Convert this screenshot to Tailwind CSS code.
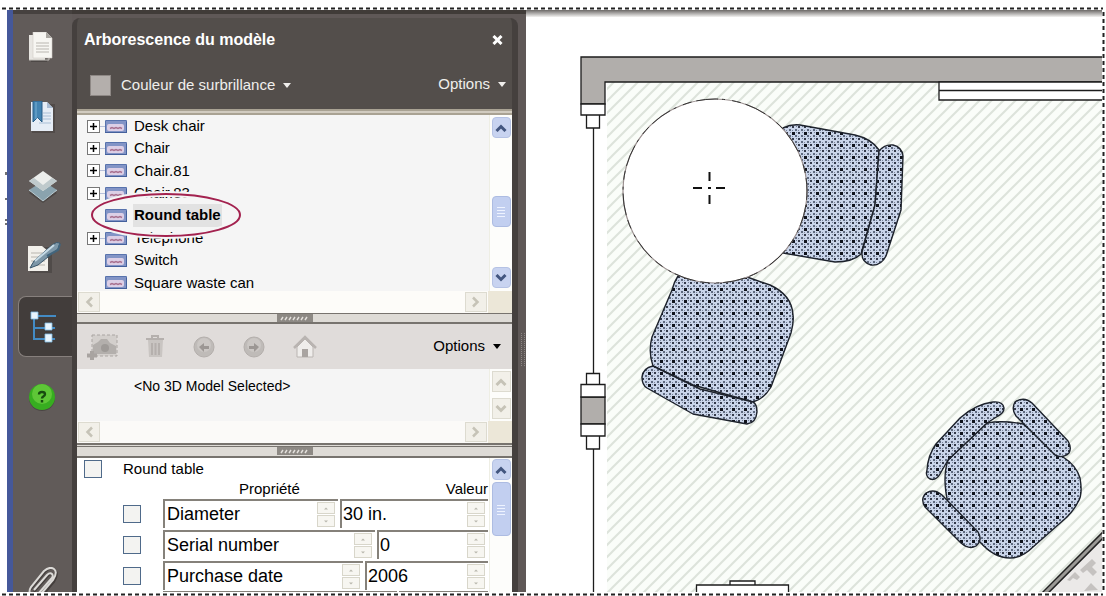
<!DOCTYPE html>
<html lang="fr">
<head>
<meta charset="utf-8">
<title>Arborescence du modèle</title>
<script src="https://cdn.jsdelivr.net/npm/@tailwindcss/browser@4"></script>
</head>
<body class="h-screen overflow-hidden bg-white font-['Liberation_Sans',sans-serif] text-[15px] text-black">

<!-- Shared symbols -->
<svg class="hidden" aria-hidden="true">
  <symbol id="part" viewBox="0 0 22 13">
    <rect width="22" height="13" rx="1" fill="#5873ad"/><rect x="1" y="1" width="20" height="11" fill="#8294c6"/>
    <rect x="2" y="4" width="17" height="7" rx="2" fill="#dccfe6"/>
    <path d="M5 8.500l2-1 2 1 2-1 2 1 2-1 2 1" stroke="#a8718f" stroke-width="1.500" fill="none"/>
    <path d="M0 12.500h22M21.500 2v11" stroke="#44609c"/>
  </symbol>
  <symbol id="plus" viewBox="0 0 13 13">
    <rect x=".5" y=".5" width="12" height="12" fill="#fff" stroke="#777"/><path d="M3 6.500h7M6.500 3v7" stroke="#000" stroke-width="1.500"/>
  </symbol>
  <symbol id="up" viewBox="0 0 12 8"><path d="M1.500 7L6 2.500 10.500 7" fill="none" stroke="currentColor" stroke-width="3"/></symbol>
  <symbol id="down" viewBox="0 0 12 8"><path d="M1.500 1L6 5.500 10.500 1" fill="none" stroke="currentColor" stroke-width="3"/></symbol>
  <symbol id="left" viewBox="0 0 8 12"><path d="M7 1.500L2.500 6 7 10.500" fill="none" stroke="currentColor" stroke-width="2.500"/></symbol>
  <symbol id="right" viewBox="0 0 8 12"><path d="M1 1.500L5.500 6 1 10.500" fill="none" stroke="currentColor" stroke-width="2.500"/></symbol>
  <symbol id="spin" viewBox="0 0 18 25">
    <rect x=".5" y=".5" width="17" height="11" fill="#f7f6f1" stroke="#d8d6ca"/><rect x=".5" y="13.500" width="17" height="11" fill="#f7f6f1" stroke="#d8d6ca"/>
    <path d="M7 7.500l2-2 2 2zM7 18.500l2 2 2-2z" fill="#b9b7ad"/>
  </symbol>
</svg>

<div class="flex h-full flex-col pl-[2px]">
  <svg class="h-[10px] w-full shrink-0" aria-hidden="true"><line x1="0" y1="8.500" x2="1101" y2="8.500" stroke="#222" stroke-width="2" stroke-dasharray="4 3"/></svg>
  <div class="flex min-h-0 flex-1">
    <svg class="w-[5px] shrink-0" aria-hidden="true"><path d="M4 162v3M4 188v2M4 209v2M4 213v2" stroke="#444" stroke-width="1.500"/></svg>

    <div class="flex min-w-0 flex-1 border-l-[6px] border-[#45589a]">
      <!-- Navigation strip -->
      <nav class="flex w-[59px] shrink-0 flex-col border-t-4 border-[#46413f] bg-[#615b59]">
        <div class="flex h-[282px] flex-col items-center justify-between pt-[18px] pb-[22px]">
          <button aria-label="Pages" class="pr-px"><svg width="28" height="32" viewBox="0 0 28 32">
            <path d="M3 5h16v25H3z" fill="#393533" opacity=".5"/><path d="M1 3h16v25H1z" fill="#e8e6e2"/><path d="M1 28h20v-3" fill="none" stroke="#c5c2bd"/>
            <path d="M5 0h13l6 6v20H5z" fill="#f7f6f2" stroke="#d1cec8" stroke-width=".6"/><path d="M18 0v6h6z" fill="#aaa7a2"/>
            <path d="M8 11h13M8 14h13M8 17h13M8 20h13" stroke="#b9b6b0"/></svg></button>
          <button aria-label="Signets"><svg width="28" height="33" viewBox="0 0 28 33">
            <path d="M3 3h23v29H3z" fill="#393533" opacity=".4"/><path d="M2 1h16l6 6v23H2z" fill="#e6edf6"/><path d="M18 1v6h6z" fill="#a9bdd5"/>
            <path d="M14 12h8M14 15h8M14 18h8M10 22h12" stroke="#aabfd6"/><path d="M4 0h9v21l-4.500-4.500L4 21z" fill="#4384b3" stroke="#285d87"/><path d="M7 1v17" stroke="#78b0d4"/></svg></button>
          <button aria-label="Calques"><svg width="30" height="33" viewBox="0 0 30 33">
            <path d="M15 13L29 23 15 33 1 23z" fill="#383431" opacity=".5"/><path d="M15 11l14 9-14 11L1 20z" fill="#8aa3ae"/><path d="M1 20l14 11 14-11" fill="none" stroke="#b9cbd2"/>
            <path d="M15 1l14 10-14 10L1 11z" fill="#eceeec"/><path d="M1 11l14 10 14-10-5-3-9 7-9-7z" fill="#bfcacc"/></svg></button>
          <button aria-label="Signatures" class="pl-1"><svg width="36" height="34" viewBox="0 0 36 34">
            <path d="M3 7h22v26H3z" fill="#383431" opacity=".4"/><path d="M1 6h14l6 5v20H1z" fill="#f2f0eb"/><path d="M4 13h12M4 17h10M4 21h14M4 25h14" stroke="#b8b5ae"/>
            <path d="M3 28l4-7L25 5q5-4 8-2l-2 6L11 25z" fill="#7d97a8" stroke="#3a566a"/><path d="M8 21L27 5" stroke="#c6dae5" stroke-width="2"/><path d="M20 16l11-6 2-6" fill="none" stroke="#42657d" stroke-width="2"/></svg></button>
        </div>
        <button aria-label="Arborescence du modèle" class="ml-[5px] flex h-[61px] items-center rounded-l-lg border-y border-l border-[#87807d] bg-[#423d3b] pl-[11px]">
          <svg width="28" height="32" viewBox="0 0 28 32"><path d="M4 5v23h21M4 17h21M8 5h18" fill="none" stroke="#438bc4" stroke-width="2"/><path d="M1 1h7v7H1zM15 12h7v7h-7zM15 23h7v8h-7z" fill="#e9f5fd" stroke="#81bce5" stroke-width=".8"/></svg>
        </button>
        <div class="flex min-h-0 flex-1 flex-col items-center justify-between overflow-hidden pt-[26px]">
          <button aria-label="Aide" class="pr-0.5"><svg width="28" height="30" viewBox="0 0 28 30"><circle cx="14" cy="15" r="13" fill="#35312f" opacity=".5"/><circle cx="14" cy="14" r="13" fill="#37ad20"/><circle cx="14" cy="11" r="10" fill="#6fd042" opacity=".7"/>
            <path d="M11 11.500q0-2.500 3-2.500t3 2.200q0 1.300-1.700 2.300-1.300.8-1.300 2M14 17v2.500" fill="none" stroke="#174b10" stroke-width="2.400"/></svg></button>
          <button aria-label="Pièces jointes" class="h-[25px] overflow-hidden"><svg width="30" height="34" viewBox="0 0 30 34"><path d="M6 25L20 9q3-3 5-1t-1 6L11 29q-4 4-8 1t0-8L17 5q6-6 10-2t-1 12L15 28" fill="none" stroke="#302c2a" stroke-width="2" opacity=".6"/><path d="M6 23L19 8q3-3 5-1t-1 5L10 27q-4 4-7 1t0-8L16 4q6-5 10-2t-1 11L13 27" fill="none" stroke="#dcdad7" stroke-width="2"/></svg></button>
        </div>
      </nav>

      <!-- Model tree panel -->
      <div class="flex w-[454px] shrink-0 border-t-4 border-[#403b38] bg-[#5f5857] pt-1 pr-2">
        <section class="flex min-w-0 flex-1 flex-col rounded-t-lg border-r-[6px] border-l-[5px] border-[#45403e] bg-[#534e4b]">
          <header class="flex flex-col text-[#f0eeec]">
            <div class="flex h-[43px] items-center justify-between pr-[9px] pl-[7px]">
              <h1 class="text-[16px] font-bold text-white">Arborescence du modèle</h1>
              <button aria-label="Fermer"><svg width="11" height="10" viewBox="0 0 11 10"><path d="M1.500 1l8 8M9.500 1l-8 8" stroke="#fff" stroke-width="3"/></svg></button>
            </div>
            <div class="flex h-[48px] items-center justify-between pr-[6px] pl-[13px]">
              <button class="flex items-center"><span class="mr-[10px] size-[21px] border border-[#8e8885] bg-[#b4afac]"></span>Couleur de surbrillance<svg class="ml-2" width="8" height="5"><path d="M0 0h8L4 5z" fill="#f0eeec"/></svg></button>
              <button class="flex items-center pb-0.5">Options<svg class="ml-2" width="8" height="5"><path d="M0 0h8L4 5z" fill="#f0eeec"/></svg></button>
            </div>
          </header>
          <div class="h-[6px] shrink-0 border-y-2 border-[#a9a293] bg-[#d1cbc0]"></div>

          <!-- Parts tree -->
          <div class="relative flex h-[176px] shrink-0 bg-[#f5f5f5]">
            <ul class="grid h-[179px] min-w-0 flex-1 grid-rows-8 pl-[10px]">
              <li class="flex items-center"><svg width="13" height="13"><use href="#plus"/></svg><span class="w-[5px] border-t border-[#b7c0da]"></span><svg class="mr-[7px]" width="22" height="13"><use href="#part"/></svg>Desk chair</li>
              <li class="flex items-center"><svg width="13" height="13"><use href="#plus"/></svg><span class="w-[5px] border-t border-[#b7c0da]"></span><svg class="mr-[7px]" width="22" height="13"><use href="#part"/></svg>Chair</li>
              <li class="flex items-center"><svg width="13" height="13"><use href="#plus"/></svg><span class="w-[5px] border-t border-[#b7c0da]"></span><svg class="mr-[7px]" width="22" height="13"><use href="#part"/></svg>Chair.81</li>
              <li class="flex items-center"><svg width="13" height="13"><use href="#plus"/></svg><span class="w-[5px] border-t border-[#b7c0da]"></span><svg class="mr-[7px]" width="22" height="13"><use href="#part"/></svg>Chair.83</li>
              <li class="flex items-center pl-[18px]"><svg class="mr-[6px]" width="22" height="13"><use href="#part"/></svg><span class="bg-[#e2e2e2] px-px font-bold">Round table</span></li>
              <li class="flex items-center"><svg width="13" height="13"><use href="#plus"/></svg><span class="w-[5px] border-t border-[#b7c0da]"></span><svg class="mr-[7px]" width="22" height="13"><use href="#part"/></svg>Telephone</li>
              <li class="flex items-center pl-[18px]"><svg class="mr-[7px]" width="22" height="13"><use href="#part"/></svg>Switch</li>
              <li class="flex items-center pl-[18px]"><svg class="mr-[7px]" width="22" height="13"><use href="#part"/></svg>Square waste can</li>
            </ul>
            <div class="flex w-[23px] flex-col items-center border-l border-[#eeeee4] bg-[#fdfdfb] pt-0.5 pb-[3px]">
              <button aria-label="Défiler vers le haut" class="flex h-[21px] w-[19px] items-center justify-center rounded-sm border border-[#b5c2e4] bg-[#c8d3f0] text-[#43567f]"><svg width="12" height="8"><use href="#up"/></svg></button>
              <div class="mt-[58px] flex h-[31px] w-[19px] items-center justify-center rounded-sm border border-[#adbce2] bg-[#c2cff0]"><svg width="8" height="11"><path d="M0 1.500h8M0 4.500h8M0 7.500h8M0 10.500h8" stroke="#eef3ff"/></svg></div>
              <button aria-label="Défiler vers le bas" class="mt-auto flex h-[21px] w-[19px] items-center justify-center rounded-sm border border-[#b5c2e4] bg-[#c8d3f0] text-[#43567f]"><svg width="12" height="8"><use href="#down"/></svg></button>
            </div>
            <!-- Callout ring round the selected part -->
            <svg class="absolute top-[75px] left-[12px]" width="156" height="50" aria-hidden="true"><ellipse cx="77" cy="25" rx="74" ry="21" fill="none" stroke="#f5f5f5" stroke-width="6"/><ellipse cx="77" cy="25" rx="74" ry="21" fill="none" stroke="#a3224f" stroke-width="2"/></svg>
          </div>
          <div class="flex h-[22px] shrink-0 items-center bg-[#fdfcf9]">
            <button aria-label="Défiler à gauche" class="ml-px flex h-[20px] w-[22px] items-center justify-center border border-[#dddbd0] bg-[#f2f0e9] text-[#c6c3b7]"><svg width="8" height="12"><use href="#left"/></svg></button>
            <button aria-label="Défiler à droite" class="ml-auto flex h-[20px] w-[22px] items-center justify-center border border-[#dddbd0] bg-[#f2f0e9] text-[#c6c3b7]"><svg width="8" height="12"><use href="#right"/></svg></button>
            <span class="ml-px h-full w-[24px] bg-[#ece7d8]"></span>
          </div>
          <div class="flex h-[11px] shrink-0 justify-center border-t border-b-2 border-[#77736e] bg-[#dedbd6]"><svg width="36" height="8"><rect width="36" height="8" fill="#8d8984"/><path d="M4 6l2-3M8 6l2-3M12 6l2-3M16 6l2-3M20 6l2-3M24 6l2-3M28 6l2-3" stroke="#e3e0dc" stroke-width="1.500"/></svg></div>

          <!-- View toolbar -->
          <div class="flex h-[45px] shrink-0 items-center bg-[#e0dcda] pr-[11px] pl-[9px]">
            <button aria-label="Créer une vue"><svg width="33" height="28" viewBox="0 0 33 28"><rect x="6" y="2" width="25" height="21" fill="#d3cfcc" stroke="#aaa5a2" stroke-dasharray="3 2"/><path d="M7 21v-9l5-3 3-3h6l3 4 6 3v8z" fill="#b3afac"/><circle cx="19" cy="15" r="4" fill="#9e9a97"/><path d="M6 18v9M1 22.500h10" stroke="#a9a4a1" stroke-width="4"/></svg></button>
            <button aria-label="Supprimer" class="ml-[25px]"><svg width="22" height="26" viewBox="0 0 22 26"><path d="M4 6h15l-1 17H5z" fill="#c9c5c2"/><path d="M2 5h18M8 5V2h6v3M8 9v12M11.500 9v12M15 9v12" fill="none" stroke="#b5b0ad" stroke-width="2"/></svg></button>
            <button aria-label="Vue précédente" class="ml-[27px]"><svg width="22" height="22" viewBox="0 0 22 22"><circle cx="11" cy="11" r="10" fill="#bfbbb8" stroke="#b4afac"/><circle cx="11" cy="9" r="7" fill="#cbc7c4"/><path d="M6 11l5-4v3h5v3h-5v3z" fill="#9c9794"/></svg></button>
            <button aria-label="Vue suivante" class="ml-[28px]"><svg width="22" height="22" viewBox="0 0 22 22"><circle cx="11" cy="11" r="10" fill="#bfbbb8" stroke="#b4afac"/><circle cx="11" cy="9" r="7" fill="#cbc7c4"/><path d="M16 11l-5-4v3H6v3h5v3z" fill="#9c9794"/></svg></button>
            <button aria-label="Vue par défaut" class="ml-[28px]"><svg width="24" height="24" viewBox="0 0 24 24"><path d="M4 12v10h16V12l-8-8z" fill="#efedeb" stroke="#bab5b2"/><path d="M1 13L12 2l11 11" fill="none" stroke="#b9b4b1" stroke-width="2.500"/><path d="M9 14h6v8H9z" fill="#a9a4a1"/></svg></button>
            <button class="ml-auto flex items-center">Options<svg class="ml-2" width="8" height="5"><path d="M0 0h8L4 5z"/></svg></button>
          </div>
          <div class="flex h-[52px] shrink-0 bg-[#f5f5f5]">
            <p class="flex-1 pt-[7px] pl-[57px] text-[14px]">&lt;No 3D Model Selected&gt;</p>
            <div class="flex w-[23px] flex-col items-center justify-between border-l border-[#eeeee4] bg-[#fdfdfb] py-0.5">
              <button aria-label="Défiler vers le haut" class="flex h-[21px] w-[19px] items-center justify-center border border-[#dddbd0] bg-[#f2f0e9] text-[#c6c3b7]"><svg width="12" height="8"><use href="#up"/></svg></button>
              <button aria-label="Défiler vers le bas" class="flex h-[21px] w-[19px] items-center justify-center border border-[#dddbd0] bg-[#f2f0e9] text-[#c6c3b7]"><svg width="12" height="8"><use href="#down"/></svg></button>
            </div>
          </div>
          <div class="flex h-[22px] shrink-0 items-center bg-[#fbfaf8]">
            <button aria-label="Défiler à gauche" class="ml-px flex h-[20px] w-[22px] items-center justify-center border border-[#dddbd0] bg-[#f2f0e9] text-[#c6c3b7]"><svg width="8" height="12"><use href="#left"/></svg></button>
            <button aria-label="Défiler à droite" class="ml-auto flex h-[20px] w-[22px] items-center justify-center border border-[#dddbd0] bg-[#f2f0e9] text-[#c6c3b7]"><svg width="8" height="12"><use href="#right"/></svg></button>
            <span class="ml-px h-full w-[24px] bg-[#ece7d8]"></span>
          </div>
          <div class="h-[3px] shrink-0 border-t-2 border-[#77736e] bg-[#dedbd6]"></div>
          <div class="flex h-[12px] shrink-0 justify-center border-t border-b-2 border-[#77736e] bg-[#dedbd6]"><svg width="36" height="9"><rect width="36" height="8" fill="#8d8984"/><path d="M4 6l2-3M8 6l2-3M12 6l2-3M16 6l2-3M20 6l2-3M24 6l2-3M28 6l2-3" stroke="#e3e0dc" stroke-width="1.500"/></svg></div>

          <!-- Properties -->
          <div class="flex min-h-0 flex-1 overflow-hidden bg-white">
            <div class="flex min-w-0 flex-1 flex-col pr-px">
              <label class="flex h-[22px] shrink-0 items-center pl-[7px]"><input type="checkbox" class="mr-[21px] size-[18px] appearance-none border border-[#4f6a8a] bg-[#f3f3f1]">Round table</label>
              <div class="flex h-[19px] shrink-0 items-center justify-between pl-[162px]"><span>Propriété</span><span>Valeur</span></div>
              <div class="flex shrink-0 flex-col gap-0.5 pl-[46px]">
                <div class="flex h-[29px] items-center">
                  <input type="checkbox" aria-label="Diameter" class="mr-[22px] size-[18px] appearance-none border border-[#4f6a8a] bg-[#f3f3f1]">
                  <div class="mr-0.5 flex h-full w-[175px] items-center border-t-2 border-l-2 border-[#85817a] pr-0.5"><input aria-label="Propriété 1" value="Diameter" class="min-w-0 flex-1 pl-0.5 text-[18px]"><svg width="20" height="25"><use href="#spin"/></svg></div>
                  <div class="flex h-full min-w-0 flex-1 items-center border-t-2 border-l-2 border-[#85817a] pr-0.5"><input aria-label="Valeur 1" value="30 in." class="min-w-0 flex-1 pl-px text-[18px]"><svg width="20" height="25"><use href="#spin"/></svg></div>
                </div>
                <div class="flex h-[29px] items-center">
                  <input type="checkbox" aria-label="Serial number" class="mr-[22px] size-[18px] appearance-none border border-[#4f6a8a] bg-[#f3f3f1]">
                  <div class="mr-0.5 flex h-full w-[212px] items-center border-t-2 border-l-2 border-[#85817a] pr-0.5"><input aria-label="Propriété 2" value="Serial number" class="min-w-0 flex-1 pl-0.5 text-[18px]"><svg width="20" height="25"><use href="#spin"/></svg></div>
                  <div class="flex h-full min-w-0 flex-1 items-center border-t-2 border-l-2 border-[#85817a] pr-0.5"><input aria-label="Valeur 2" value="0" class="min-w-0 flex-1 pl-px text-[18px]"><svg width="20" height="25"><use href="#spin"/></svg></div>
                </div>
                <div class="flex h-[29px] items-center">
                  <input type="checkbox" aria-label="Purchase date" class="mr-[22px] size-[18px] appearance-none border border-[#4f6a8a] bg-[#f3f3f1]">
                  <div class="mr-0.5 flex h-full w-[200px] items-center border-t-2 border-l-2 border-[#85817a] pr-0.5"><input aria-label="Propriété 3" value="Purchase date" class="min-w-0 flex-1 pl-0.5 text-[18px]"><svg width="20" height="25"><use href="#spin"/></svg></div>
                  <div class="flex h-full min-w-0 flex-1 items-center border-t-2 border-l-2 border-[#85817a] pr-0.5"><input aria-label="Valeur 3" value="2006" class="min-w-0 flex-1 pl-px text-[18px]"><svg width="20" height="25"><use href="#spin"/></svg></div>
                </div>
                <div class="-mt-px flex h-[29px] pl-[40px]"><div class="mr-0.5 w-[234px] border-t-2 border-l-2 border-[#85817a]"></div><div class="flex-1 border-t-2 border-l-2 border-[#85817a]"></div></div>
              </div>
            </div>
            <div class="flex w-[23px] flex-col items-center border-l border-[#eeeee4] bg-[#fdfdfb] pt-px">
              <button aria-label="Défiler vers le haut" class="flex h-[21px] w-[19px] shrink-0 items-center justify-center rounded-sm border border-[#b5c2e4] bg-[#c8d3f0] text-[#43567f]"><svg width="12" height="8"><use href="#up"/></svg></button>
              <div class="mt-0.5 flex h-[54px] w-[19px] shrink-0 items-center justify-center rounded-sm border border-[#adbce2] bg-[#c2cff0]"><svg width="8" height="11"><path d="M0 1.500h8M0 4.500h8M0 7.500h8M0 10.500h8" stroke="#eef3ff"/></svg></div>
            </div>
          </div>
        </section>
        <svg class="absolute top-[333px] left-[520px]" width="6" height="34" aria-hidden="true"><path d="M1.500 0v34M4.500 0v34" stroke="#8d8785" stroke-dasharray="1 1"/></svg>
      </div>

      <!-- Floor plan, drawn on page coordinates -->
      <main class="min-w-0 flex-1 overflow-hidden">
        <svg class="h-full w-full" role="img" aria-label="Plan de la pièce">
          <defs>
            <pattern id="hatch" width="12" height="12" patternUnits="userSpaceOnUse"><rect width="12" height="12" fill="#fafdf9"/><path d="M-3 15L15-3M-3 3L3-3M9 15l6-6" stroke="#dde3db" stroke-width="2"/></pattern>
            <pattern id="fabric" width="12" height="12" patternUnits="userSpaceOnUse"><rect width="12" height="12" fill="#cad5ea"/>
              <path d="M0 0h3v3H0z" fill="#10131c"/>
              <path d="M6 0h2v2H6zM0 6h2v2H0zM6 6h2v2H6z" fill="#343a4b"/>
              <path d="M3 3h2v2H3zM9 3h2v2H9zM3 9h2v2H3zM9 9h2v2H9z" fill="#5f6a80"/>
              <path d="M4 0h1v1H4zM10 0h1v1h-1zM6 4h1v1H6zM0 4h1v1H0zM4 6h1v1H4zM10 6h1v1h-1zM0 10h1v1H0zM6 10h1v1H6z" fill="#78839a"/></pattern>
            <linearGradient id="shade" x2="0" y2="1"><stop stop-color="#6c6967"/><stop offset="1" stop-color="#f3f2f1"/></linearGradient>
          </defs>
          <g transform="translate(-526 -10)">
            <rect x="526" y="10" width="2000" height="7" fill="url(#shade)"/>
            <rect x="607" y="82" width="2000" height="1500" fill="url(#hatch)"/>
            <g fill="#b1aeab" stroke="#1c1c1c" stroke-width="1.300">
              <path d="M2600 57H581v47h24V82h1995z"/>
              <path d="M581 397h24v27h-24z"/>
              <g fill="#fff"><path d="M581 104h24v11h-24zM586.500 115h13v13h-13zM586.500 373.500h13v11h-13zM581 384.500h24V397h-24zM581 424h24v12h-24zM586.500 436h13v13h-13zM939 82h1700v18H939z"/>
              <path d="M939 90.500h1700M593.500 128v245M593.500 449v1200M696.500 650v-65h92v65zM730 585v-4h25v4z"/></g>
            </g>
            <g fill="url(#fabric)" stroke="#1d222c" stroke-width="1.400" stroke-linejoin="round">
              <path d="M783 128Q791 124 800 125L855 135Q872 139 879 150L875 205 861 254Q853 262 835 262L783 253 765 190z"/>
              <path d="M879 151Q885 144 893 145 902 147 903 156L901 210 886 256Q881 266 871 265 861 262 862 252L875 205z"/>
              <path d="M678 276Q674 282 672 290L652 337Q648 352 653 366L693 385 753 402Q764 399 771 387L791 333Q794 322 793 315 792 295 770 285L747 277 710 270z"/>
              <path d="M653 366Q643 368 642 377 642 385 647 388L693 414 747 424Q756 423 757 412 757 404 753 402L700 389z"/>
              <path d="M987 423Q1003 420 1023 424L1063 457Q1076 465 1080 478 1083 495 1078 502 1074 510 1067 517L1033 547Q1022 558 1010 558 994 558 980 542L948 503Q942 478 948 460z"/>
              <path d="M993 402Q1003 401 1004 408 1004 413 998 416L987 423 948 460 940 474Q936 481 930 479 925 476 927 470 928 455 936 444L960 418Q976 404 993 402z"/>
              <path d="M1016 416Q1011 409 1015 402 1024 396 1032 403L1068 441Q1072 448 1069 453 1063 459 1055 455z"/>
              <path d="M925 507Q920 499 926 493 934 488 942 495L978 532Q983 540 976 546 969 550 961 543z"/>
            </g>
            <circle cx="715" cy="191" r="92" fill="#fff" stroke="#9a8f8f" stroke-width="1.200"/>
            <circle cx="715" cy="191" r="92" fill="none" stroke="#333" stroke-dasharray="9 5 22 4 3 7"/>
            <path d="M709.500 172v9M709.500 195v9M693 188h9M716 188h9M708 188h3" stroke="#111" stroke-width="2"/>
            <path d="M1044 592L1112 525v67z" fill="#ebe9e8"/>
            <path d="M1044 594L1112 526" stroke="#222" stroke-width="6"/><path d="M1044 594L1112 526" stroke="#9b9996" stroke-width="3"/>
            <path d="M1067 580l8-8 5 5-3 3-4-2-3 3zM1080 570l12-11 4 4-4 4 5 5-4 4-6-6-4 3zM1084 591l7-8 7 7z" fill="#c5c2c0"/>
          </g>
        </svg>
      </main>
    </div>
    <svg class="w-[4px] shrink-0" aria-hidden="true"><line x1="1.500" y1="2" x2="1.500" y2="584" stroke="#222" stroke-width="2" stroke-dasharray="4 3"/></svg>
  </div>
  <svg class="h-[4px] w-full shrink-0" aria-hidden="true"><line x1="0" y1="2.500" x2="1101" y2="2.500" stroke="#222" stroke-width="2" stroke-dasharray="4 3"/></svg>
</div>
</body>
</html>
